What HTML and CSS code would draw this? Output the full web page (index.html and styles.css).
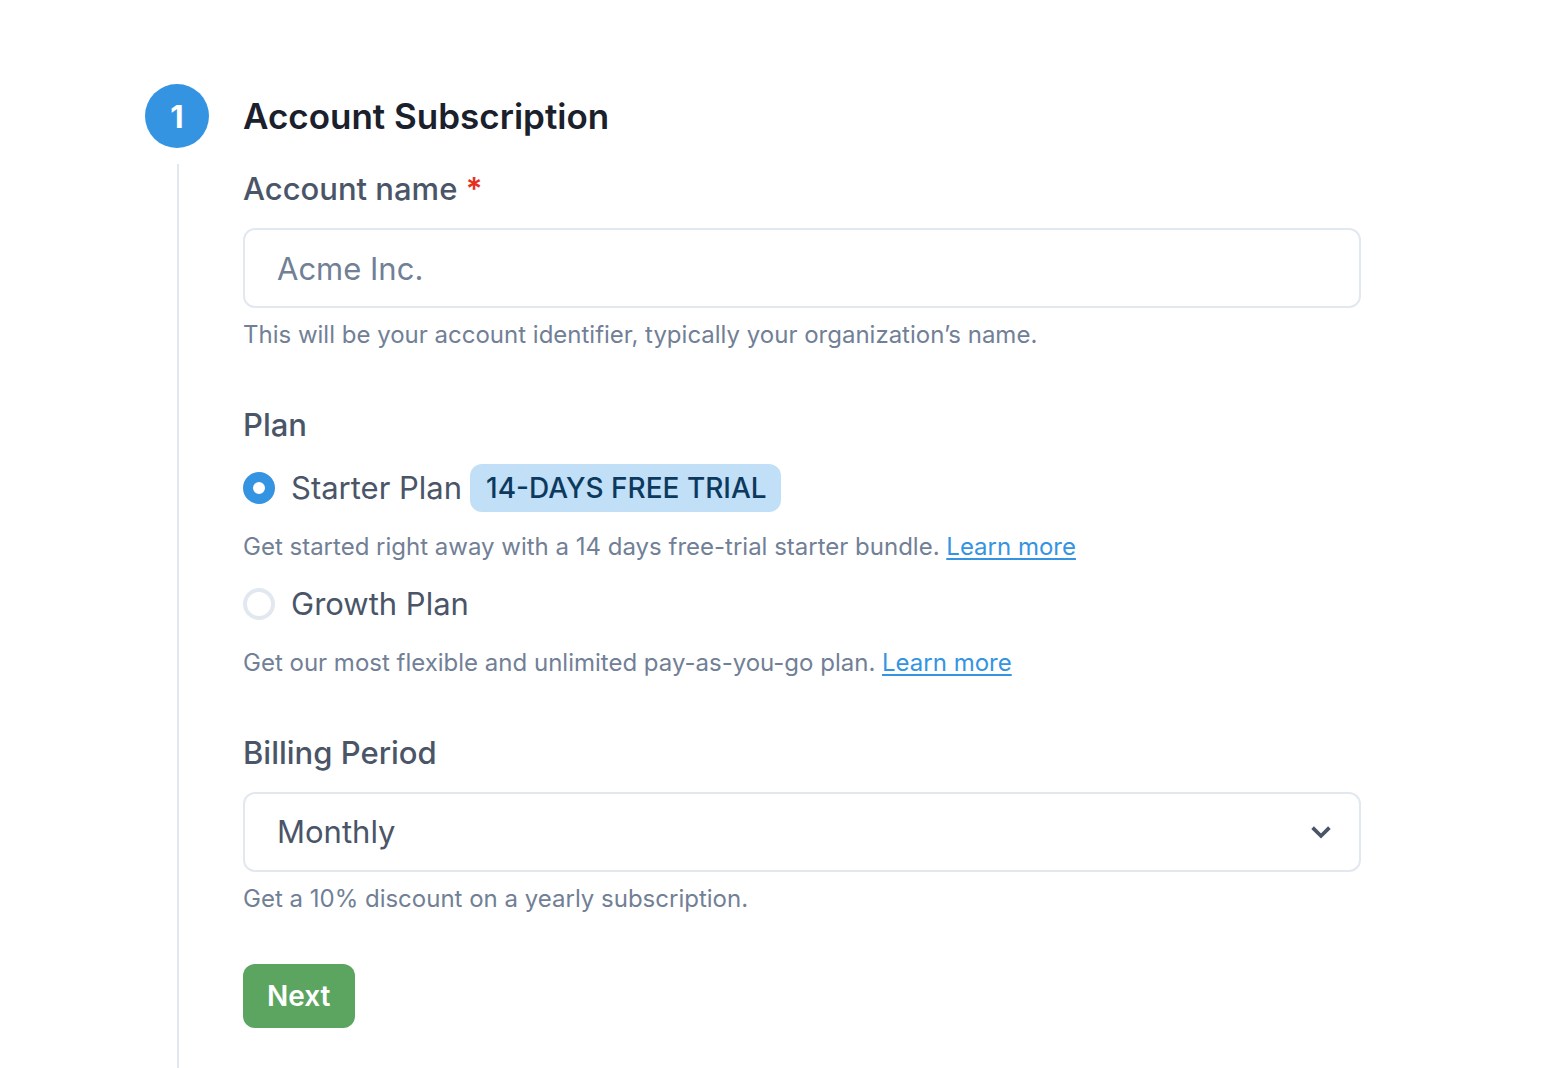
FILE: index.html
```html
<!DOCTYPE html>
<html lang="en">
<head>
<meta charset="utf-8">
<meta name="viewport" content="width=device-width, initial-scale=1">
<title>Account Subscription</title>
<link rel="stylesheet" href="styles.css">
</head>
<body>
<main class="step">
  <div class="rail">
    <span class="step-number">1</span>
    <span class="rail-line"></span>
  </div>
  <form class="content">
    <h1 class="title">Account Subscription</h1>

    <div class="field">
      <label class="label" for="account">Account name <span class="required">*</span></label>
      <input class="control" id="account" type="text" placeholder="Acme Inc." required>
      <p class="help">This will be your account identifier, typically your organization’s name.</p>
    </div>

    <fieldset class="field">
      <legend class="label">Plan</legend>
      <div class="plan">
        <label class="option"><input class="radio" type="radio" name="plan" checked><span>Starter Plan</span></label>
        <span class="badge">14-DAYS FREE TRIAL</span>
      </div>
      <p class="help plan-help">Get started right away with a 14 days free-trial starter bundle. <a class="link" href="#starter">Learn more</a></p>
      <div class="plan">
        <label class="option"><input class="radio" type="radio" name="plan"><span>Growth Plan</span></label>
      </div>
      <p class="help plan-help">Get our most flexible and unlimited pay-as-you-go plan. <a class="link" href="#growth">Learn more</a></p>
    </fieldset>

    <div class="field">
      <label class="label" for="billing">Billing Period</label>
      <div class="select-wrap">
        <select class="control select" id="billing">
          <option>Monthly</option>
          <option>Yearly</option>
        </select>
        <svg class="chevron" viewBox="0 0 40 40" aria-hidden="true"><path d="M11.6 15.6l8.4 8.4 8.4-8.4" fill="none" stroke="currentColor" stroke-width="3.7"/></svg>
      </div>
      <p class="help">Get a 10% discount on a yearly subscription.</p>
    </div>

    <button class="next" type="button">Next</button>
  </form>
</main>
</body>
</html>
```

FILE: styles.css
```css
* { box-sizing: border-box; }

body {
  margin: 0;
  background: #fff;
  color: #4a5568;
  font-family: Inter, "Liberation Sans", sans-serif;
  font-size: 31px;
  line-height: 48px;
}

.step {
  display: flex;
  gap: 34px;
  min-height: 100vh;
  padding: 84px 199px 0 145px;
}

.rail {
  display: flex;
  flex: none;
  flex-direction: column;
  gap: 16px;
  width: 64px;
}

.step-number {
  width: 64px;
  height: 64px;
  border-radius: 50%;
  background: #3594e1;
  color: #fff;
  font-weight: 700;
  line-height: 66px;
  text-align: center;
}

.rail-line {
  flex: 1;
  align-self: flex-end;
  width: 50%;
  border-left: 2px solid #e2e8f0;
}

.content {
  flex: 1;
  min-width: 0;
  padding-bottom: 40px;
}

.title {
  margin: 0 0 16px;
  color: #1a202c;
  font-size: 35px;
  font-weight: 600;
  line-height: 64px;
}

.field {
  margin: 0 0 46px;
  padding: 0;
  border: 0;
}

.label {
  display: block;
  margin-bottom: 14px;
  padding: 0;
  font-weight: 500;
  line-height: 50px;
}

.required {
  color: #e53020;
  font-weight: 600;
}

.control {
  display: block;
  width: 100%;
  height: 80px;
  padding: 0 32px;
  border: 2px solid #e2e8f0;
  border-radius: 12px;
  background: #fff;
  color: #4a5568;
  font: inherit;
}

.control::placeholder {
  color: #718096;
  opacity: 1;
}

.help {
  margin: 8px 0 0;
  color: #718096;
  font-size: 24px;
  line-height: 38px;
}

.plan {
  display: flex;
  align-items: center;
  gap: 8px;
}

.plan-help { margin: 16px 0 14px; }

.plan-help:last-child { margin-bottom: 0; }

.option {
  display: flex;
  align-items: center;
  gap: 16px;
}

.radio {
  appearance: none;
  width: 32px;
  height: 32px;
  margin: 0;
  border: 4px solid #e2e8f0;
  border-radius: 50%;
  background: #fff;
}

.radio:checked { border: 10px solid #3594e1; }

.badge {
  padding: 0 14px 0 16px;
  border-radius: 12px;
  background: #c1dff7;
  color: #0c3a5e;
  font-size: 28px;
  font-weight: 500;
}

.link {
  color: #3594e1;
  text-decoration-thickness: 2px;
  text-underline-offset: 3px;
}

.select-wrap { display: grid; }

.select-wrap > * { grid-area: 1 / 1; }

.select { appearance: none; }

.chevron {
  place-self: center end;
  width: 40px;
  height: 40px;
  margin-right: 20px;
  pointer-events: none;
}

.next {
  display: block;
  height: 64px;
  padding: 0 24px;
  border: 0;
  border-radius: 12px;
  background: #5ba561;
  color: #fff;
  font: inherit;
  font-size: 28px;
  font-weight: 600;
}
```
